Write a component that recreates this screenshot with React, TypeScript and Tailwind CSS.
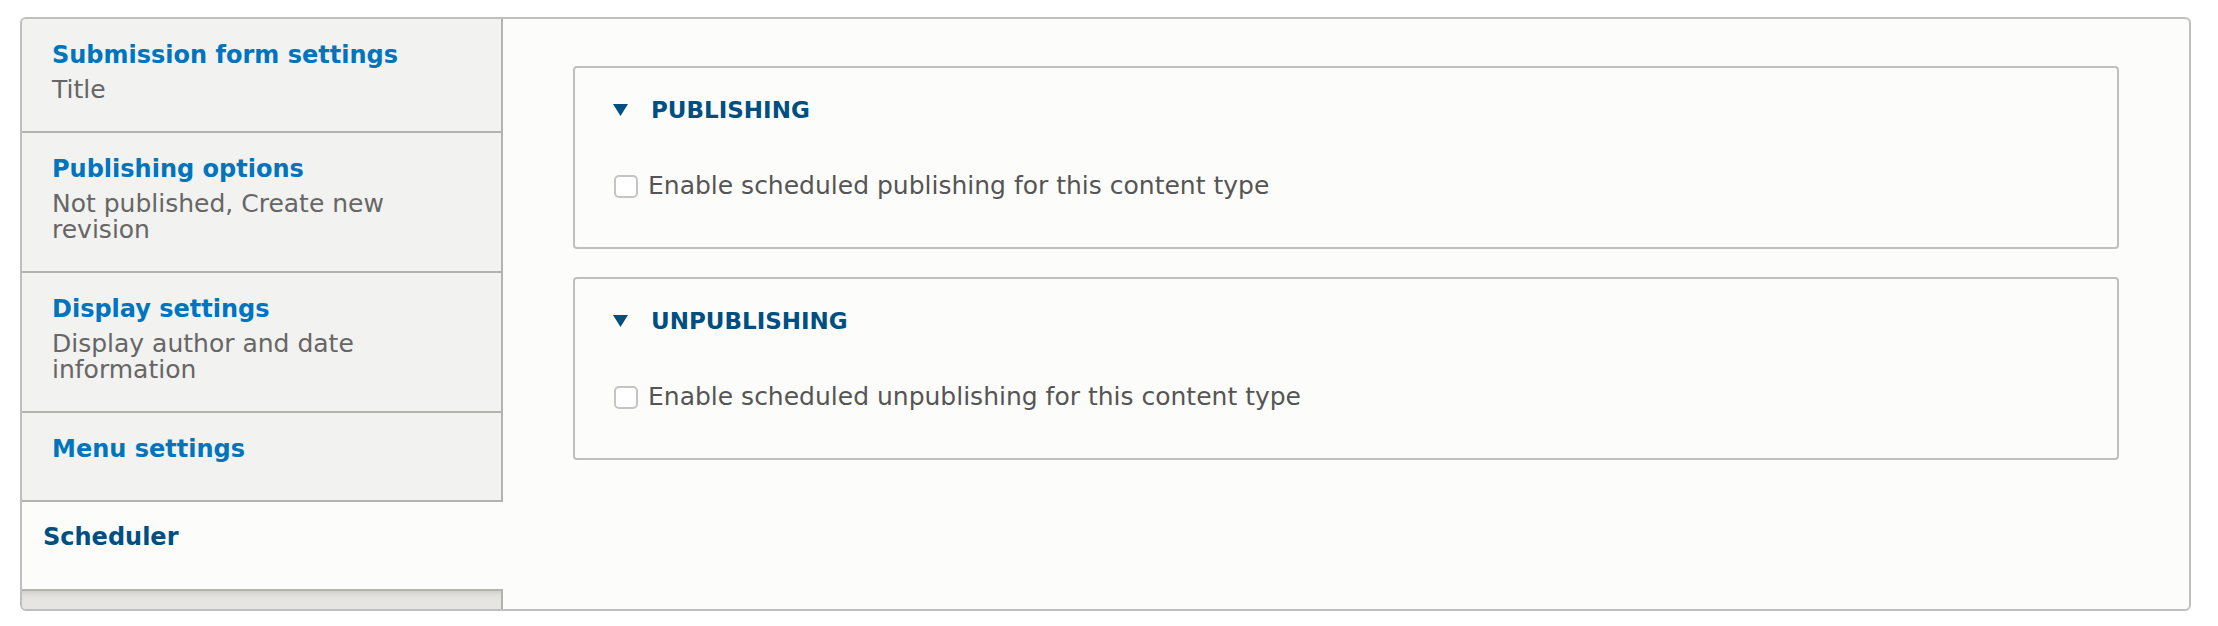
import { useState } from 'react';

interface Tab {
  id: string;
  title: string;
  summary?: string;
}

const tabs: Tab[] = [
  { id: 'submission', title: 'Submission form settings', summary: 'Title' },
  { id: 'publishing', title: 'Publishing options', summary: 'Not published, Create new revision' },
  { id: 'display', title: 'Display settings', summary: 'Display author and date information' },
  { id: 'menu', title: 'Menu settings' },
  { id: 'scheduler', title: 'Scheduler' },
];

const sections = [
  { id: 'publish', legend: 'Publishing', label: 'Enable scheduled publishing for this content type' },
  { id: 'unpublish', legend: 'Unpublishing', label: 'Enable scheduled unpublishing for this content type' },
];

function Fieldset({ legend, label }: { legend: string; label: string }) {
  const [open, setOpen] = useState(true);
  const [checked, setChecked] = useState(false);

  return (
    <div className="border-2 border-[#bfbfbf] rounded-[4px] bg-[#fcfcfa] pl-[38px] pt-[28px] pb-[47px]">
      <button onClick={() => setOpen(o => !o)} className="flex items-center gap-[23px] h-[28px] text-[23px] leading-[28px] font-bold uppercase text-[#004f80]">
        <svg width="15" height="12" viewBox="0 0 15 12" className={open ? '' : '-rotate-90'}>
          <polygon points="0,0 15,0 7.5,12" fill="#004f80" />
        </svg>
        {legend}
      </button>
      {open && (
        <label className="flex items-center gap-[10px] mt-[48px] h-[28px] text-[25px] leading-[28px] text-[#555555] cursor-pointer">
          <input
            type="checkbox"
            checked={checked}
            onChange={e => setChecked(e.target.checked)}
            className="appearance-none ml-[1px] w-[24px] h-[23px] rounded-[5px] border-2 border-[#c4c4c4] bg-white checked:bg-[#0074bd]"
          />
          {label}
        </label>
      )}
    </div>
  );
}

export default function App() {
  const [active, setActive] = useState('scheduler');

  return (
    <div className="w-[2218px] h-[626px] bg-white pt-[17px] pl-[20px]" style={{ fontFamily: '"DejaVu Sans", "Lucida Grande", sans-serif' }}>
      <div className="flex w-[2171px] h-[594px] border-2 border-[#bfbfbf] rounded-[6px] bg-[#fcfcfa] overflow-hidden">
        {/* Vertical tab menu */}
        <div className="flex flex-col w-[481px] shrink-0">
          {tabs.map(t => {
            const selected = t.id === active;
            if (selected) {
              return (
                <button key={t.id} onClick={() => setActive(t.id)} className="text-left bg-[#fcfcfa] pl-[21px] pt-[22px] pb-[39px]">
                  <div className="text-[24px] leading-[26px] font-bold text-[#004f80]">{t.title}</div>
                </button>
              );
            }
            return (
              <button
                key={t.id}
                onClick={() => setActive(t.id)}
                className={`text-left bg-[#f2f2f0] border-r-2 border-b-2 border-[#b3b3ae] pl-[30px] pr-[30px] pt-[23px] ${t.summary ? 'pb-[28px]' : 'pb-[38px]'}`}
              >
                <div className="text-[24px] leading-[26px] font-bold text-[#0074bd]">{t.title}</div>
                {t.summary && <div className="mt-[9px] text-[25px] leading-[26px] text-[#666666]">{t.summary}</div>}
              </button>
            );
          })}
          <div className="flex-1 bg-[#e6e5e1] border-r-2 border-t-2 border-[#b3b3ae] shadow-[inset_0_6px_6px_-4px_rgba(0,0,0,0.12)]" />
        </div>

        {/* Tab pane */}
        <div className="flex-1 flex flex-col gap-[28px] pt-[47px] pl-[70px] pr-[70px]">
          {sections.map(s => (
            <Fieldset key={s.id} legend={s.legend} label={s.label} />
          ))}
        </div>
      </div>
    </div>
  );
}
